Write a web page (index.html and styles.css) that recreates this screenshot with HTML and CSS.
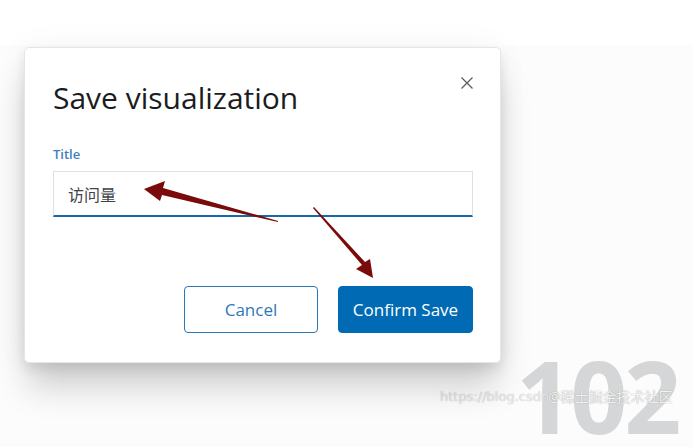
FILE: index.html
```html
<!DOCTYPE html>
<html lang="en">
<head>
  <meta charset="UTF-8" />
  <title>Save visualization</title>
  <link rel="stylesheet" href="styles.css">
</head>
<body>
  <div class="page">
    <!-- metric behind the modal -->
    <div class="metric">102</div>
    <div class="wm-url">https://blog.csdn</div>
    <div class="wm-name">@稀土掘金技术社区</div>

    <div class="modal">
      <button class="close-btn" aria-label="Close">
        <svg width="14" height="14" viewBox="0 0 14 14"><path d="M1.5 1.5 L12.5 12.5 M12.5 1.5 L1.5 12.5" stroke="#5a5e66" stroke-width="1.3" fill="none"/></svg>
      </button>
      <h1 class="modal-title">Save visualization</h1>

      <label class="field-label" for="title">Title</label>
      <input class="field-input" id="title" type="text" value="访问量" />

      <div class="modal-footer">
        <button class="btn btn-empty">Cancel</button>
        <button class="btn btn-fill">Confirm Save</button>
      </div>
    </div>

    <!-- annotation arrows -->
    <svg class="arrows" width="693" height="447" viewBox="0 0 693 447">
      <polygon points="278,222 162,195 160,201 144,189 165,181 163,188 278,221" fill="#7b0a0a"/>
      <polygon points="313,208 362,265 356,269 373,278 370,259 365,262 314,207" fill="#7b0a0a"/>
    </svg>
  </div>
</body>
</html>
```

FILE: styles.css
```css
* {
  box-sizing: border-box;
}

body {
  margin: 0;
  background: #fff;
  font-family: 'Open Sans', 'Noto Sans', 'Noto Sans CJK SC', sans-serif;
  color: #343741;
}

.page {
  position: relative;
  width: 693px;
  height: 447px;
  overflow: hidden;
  padding: 47px 0 0 24px;
  background: linear-gradient(#fff 0, #fff 44px, #fcfcfc 46px, #fcfcfc 100%);
}

.metric {
  position: absolute;
  left: 516px;
  top: 345px;
  font-size: 100px;
  font-weight: 700;
  letter-spacing: -3px;
  color: #d5d6d7;
  line-height: 1;
}

.wm-url {
  position: absolute;
  left: 440px;
  top: 389px;
  font-family: 'DejaVu Sans', sans-serif;
  font-size: 13px;
  color: rgba(255, 255, 255, 0.7);
  text-shadow: 0 0 1px #aaa;
  white-space: nowrap;
}

.wm-name {
  position: absolute;
  left: 548px;
  top: 386px;
  font-size: 14px;
  white-space: nowrap;
  color: rgba(255, 255, 255, 0.9);
  text-shadow: 0 0 1px #888;
}

.modal {
  position: relative;
  width: 477px;
  height: 316px;
  background: #fff;
  border: 1px solid #e4e6ea;
  border-radius: 5px;
  padding: 28px 27px 0 28px;
  box-shadow: 0 28px 34px -4px rgba(0, 0, 0, 0.18), 0 6px 12px rgba(0, 0, 0, 0.08), 0 0 30px rgba(0, 0, 0, 0.05);
}

.close-btn {
  position: absolute;
  right: 26px;
  top: 28px;
  border: 0;
  background: none;
  padding: 0;
  width: 14px;
  height: 14px;
  cursor: pointer;
}

.modal-title {
  margin: 0 0 25px;
  font-size: 30px;
  font-weight: 500;
  line-height: 44px;
  color: #1a1c21;
}

.field-label {
  display: block;
  font-size: 13px;
  font-weight: 600;
  color: #3f7ebf;
  line-height: 18px;
  margin-bottom: 8px;
}

.field-input {
  display: block;
  width: 420px;
  height: 46px;
  margin: 0;
  padding: 0 14px;
  font-family: inherit;
  font-size: 16px;
  color: #404349;
  background: #fff;
  border: 1px solid #dde0e4;
  border-bottom: 2px solid #1569ad;
  border-radius: 0;
  outline: none;
}

.modal-footer {
  display: flex;
  justify-content: flex-end;
  gap: 20px;
  margin-top: 69px;
}

.btn {
  height: 47px;
  width: 135px;
  border-radius: 4px;
  font-family: inherit;
  font-size: 17px;
  cursor: pointer;
}

.btn-empty {
  width: 134px;
  background: #fff;
  color: #2e78b8;
  border: 1px solid #2a78b8;
}

.btn-fill {
  background: #006bb4;
  color: #fff;
  border: 1px solid #006bb4;
}

.arrows {
  position: absolute;
  left: 0;
  top: 0;
  pointer-events: none;
}
```
